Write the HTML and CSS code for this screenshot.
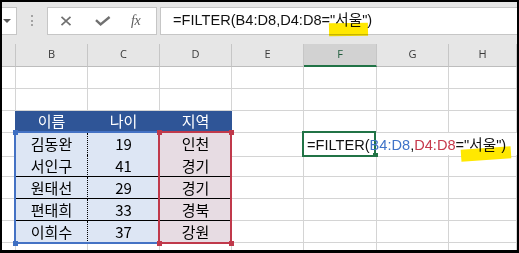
FILE: index.html
```html
<!DOCTYPE html>
<html lang="ko">
<head>
    <meta charset="UTF-8">
    <title>FILTER</title>
    <link rel="stylesheet" href="styles.css">
</head>
<body>
    <div class="window">
        <!-- formula bar -->
        <div class="toolbar">
            <div class="name-box"><span class="drop"></span></div>
            <div class="grip"><i></i><i></i><i></i></div>
            <div class="fx-buttons">
                <svg class="ic-x" width="12" height="10" viewBox="0 0 12 10"><path d="M1.5 0.8 L10.5 9.2 M10.5 0.8 L1.5 9.2" stroke="#707070" stroke-width="1.7" fill="none"/></svg>
                <svg class="ic-ok" width="16" height="10" viewBox="0 0 16 10"><path d="M1 4.2 L5.6 8.4 L14.6 1" stroke="#707070" stroke-width="2.4" fill="none"/></svg>
                <span class="fx">fx</span>
            </div>
            <div class="formula-input">
                <span class="formula">=FILTER(B4:D8,D4:D8=<span class="hl hl-bar">"서울</span>")</span>
            </div>
        </div>

        <div class="sheet">
            <div class="row col-head">
                <div class="cell"></div><div class="cell">B</div><div class="cell">C</div><div class="cell">D</div>
                <div class="cell">E</div><div class="cell sel">F</div><div class="cell">G</div><div class="cell">H</div>
            </div>
            <div class="row">
                <div class="cell"></div><div class="cell"></div><div class="cell"></div><div class="cell"></div>
                <div class="cell"></div><div class="cell"></div><div class="cell"></div><div class="cell"></div>
            </div>
            <div class="row">
                <div class="cell"></div><div class="cell"></div><div class="cell"></div><div class="cell"></div>
                <div class="cell"></div><div class="cell"></div><div class="cell"></div><div class="cell"></div>
            </div>
            <div class="row">
                <div class="cell before-table"></div>
                <div class="cell th">이름</div><div class="cell th">나이</div><div class="cell th">지역</div>
                <div class="cell"></div><div class="cell"></div><div class="cell"></div><div class="cell"></div>
            </div>
            <div class="row">
                <div class="cell"></div>
                <div class="cell td name">김동완</div><div class="cell td">19</div><div class="cell td area">인천</div>
                <div class="cell"></div>
                <div class="cell editing">
                    <span class="edit-text">=FILTER(<span class="ref-blue">B4:D8</span>,<span class="ref-red">D4:D8</span>=<span class="hl hl-cell">"서울")</span></span>
                    <span class="active"></span>
                    <span class="fill-handle"></span>
                </div>
                <div class="cell no-grid"></div><div class="cell no-grid"></div>
            </div>
            <div class="row">
                <div class="cell"></div>
                <div class="cell td name">서인구</div><div class="cell td">41</div><div class="cell td area">경기</div>
                <div class="cell"></div><div class="cell"></div><div class="cell"></div><div class="cell"></div>
            </div>
            <div class="row">
                <div class="cell"></div>
                <div class="cell td name">원태선</div><div class="cell td">29</div><div class="cell td area">경기</div>
                <div class="cell"></div><div class="cell"></div><div class="cell"></div><div class="cell"></div>
            </div>
            <div class="row">
                <div class="cell"></div>
                <div class="cell td name">편태희</div><div class="cell td">33</div><div class="cell td area">경북</div>
                <div class="cell"></div><div class="cell"></div><div class="cell"></div><div class="cell"></div>
            </div>
            <div class="row">
                <div class="cell"></div>
                <div class="cell td name">이희수</div><div class="cell td">37</div><div class="cell td area">강원</div>
                <div class="cell"></div><div class="cell"></div><div class="cell"></div><div class="cell"></div>
            </div>
            <div class="row">
                <div class="cell"></div><div class="cell"></div><div class="cell"></div><div class="cell"></div>
                <div class="cell"></div><div class="cell"></div><div class="cell"></div><div class="cell"></div>
            </div>

            <!-- reference outlines drawn by the formula being edited -->
            <div class="range range-blue"></div>
            <div class="range range-red"></div>
            <span class="handle blue" style="left:11px;top:86px"></span>
            <span class="handle blue" style="left:11px;top:197px"></span>
            <span class="handle red" style="left:155px;top:86px"></span>
            <span class="handle red" style="left:227px;top:86px"></span>
            <span class="handle red" style="left:155px;top:197px"></span>
            <span class="handle red" style="left:227px;top:197px"></span>
        </div>
    </div>
</body>
</html>
```

FILE: styles.css
```css
/* General */
body {
    margin: 0;
    background: #000;
    font-family: "Open Sans", "Noto Sans CJK KR", sans-serif;
}

.window {
    margin: 2px 2px 3px 2px;
    width: 515px;
    height: 248px;
    overflow: hidden;
    background: #fff;
}

/* Formula bar */
.toolbar {
    height: 42px;
    box-sizing: border-box;
    padding-top: 5px;
    background: #e6e6e6;
    display: flex;
    align-items: flex-start;
}

.name-box {
    width: 15px;
    height: 28px;
    box-sizing: border-box;
    background: #fff;
    border: 1px solid #c6c6c6;
    border-left: none;
    display: flex;
    align-items: center;
}

.drop {
    margin-left: 1px;
    width: 0;
    height: 0;
    border-left: 4px solid transparent;
    border-right: 4px solid transparent;
    border-top: 4px solid #5a5a5a;
}

.grip {
    margin: 8px 0 0 14px;
    display: flex;
    flex-direction: column;
    gap: 2.5px;
}

.grip i {
    display: block;
    width: 2px;
    height: 2px;
    background: #a3a3a3;
}

.fx-buttons {
    margin-left: 14px;
    width: 110px;
    height: 28px;
    box-sizing: border-box;
    background: #fff;
    border: 1px solid #c6c6c6;
    display: flex;
    align-items: center;
    padding-left: 12px;
}

.ic-ok {
    margin-left: 23px;
}

.fx {
    margin-left: 20px;
    font-family: "Liberation Serif", serif;
    font-style: italic;
    font-size: 14px;
    color: #5c5c5c;
    letter-spacing: -0.5px;
}

.formula-input {
    margin-left: 3px;
    flex: 1;
    height: 28px;
    box-sizing: border-box;
    background: #fff;
    border: 1px solid #c6c6c6;
    border-right: none;
    padding-left: 12px;
}

.formula, .edit-text {
    font-family: "Liberation Sans", "Noto Sans CJK KR", sans-serif;
    font-size: 14.6px;
    white-space: nowrap;
    color: #111;
}

.formula {
    line-height: 25px;
}

/* yellow marker */
.hl {
    position: relative;
}

.hl::after {
    content: "";
    position: absolute;
    background: #ffe800;
    mix-blend-mode: multiply;
}

.hl-bar::after {
    left: -1px;
    right: -6px;
    top: 11px;
    height: 13px;
    transform: rotate(-1deg);
}

.hl-cell::after {
    left: -3px;
    right: -5px;
    top: 11px;
    height: 12px;
    transform: rotate(-4deg);
}

/* Sheet */
.sheet {
    position: relative;
}

.row {
    display: grid;
    grid-template-columns: 14px 72px 72px 72px 72px 73px 72px 68px;
    height: 22px;
}

.cell {
    box-sizing: border-box;
    border-right: 1px solid #d4d4d4;
    border-bottom: 1px solid #d4d4d4;
}

.col-head {
    height: 23px;
    background: #e6e6e6;
}

.col-head .cell {
    border-right-color: #c6c6c6;
    border-bottom-color: #bdbdbd;
    font-size: 11px;
    line-height: 19px;
    text-align: center;
    color: #3a3a3a;
}

.col-head .sel {
    background: #d2d2d2;
    border-bottom: 2px solid #217346;
    color: #1f5c3c;
}

.before-table {
    border-right-color: #2f5597;
}

.th, .td {
    font-family: "Noto Sans CJK KR", sans-serif;
    font-size: 15px;
    text-align: center;
}

.th {
    background: #2f5597;
    border-right-color: #2f5597;
    color: #fff;
    line-height: 19px;
}

.td {
    background: #dde6f4;
    border-bottom-color: #000;
    color: #000;
    line-height: 21px;
}

.td.name {
    border-right: 1px dotted #000;
}

.td.area {
    background: #e7dce3;
}

.editing {
    position: relative;
    border-right-color: transparent;
}

.no-grid {
    border-right-color: transparent;
}

.edit-text {
    position: relative;
    z-index: 2;
    padding-left: 3px;
    line-height: 21px;
}

.ref-blue {
    color: #3f73c8;
}

.ref-red {
    color: #c6394c;
}

.active {
    position: absolute;
    left: -2px;
    top: -2px;
    right: 0;
    bottom: -1px;
    border: 2px solid #217346;
}

.fill-handle {
    position: absolute;
    left: 69px;
    top: 20px;
    width: 5px;
    height: 4px;
    background: #217346;
}

.range {
    position: absolute;
    top: 87px;
    height: 113px;
    box-sizing: border-box;
    border: 2px solid;
}

.range-blue {
    left: 12px;
    width: 218px;
    border-color: #4472c4;
}

.range-red {
    left: 156px;
    width: 74px;
    border-color: #c0394b;
}

.handle {
    position: absolute;
    width: 5px;
    height: 5px;
}

.handle.blue {
    background: #3e6fc2;
}

.handle.red {
    background: #c0394b;
}
```
